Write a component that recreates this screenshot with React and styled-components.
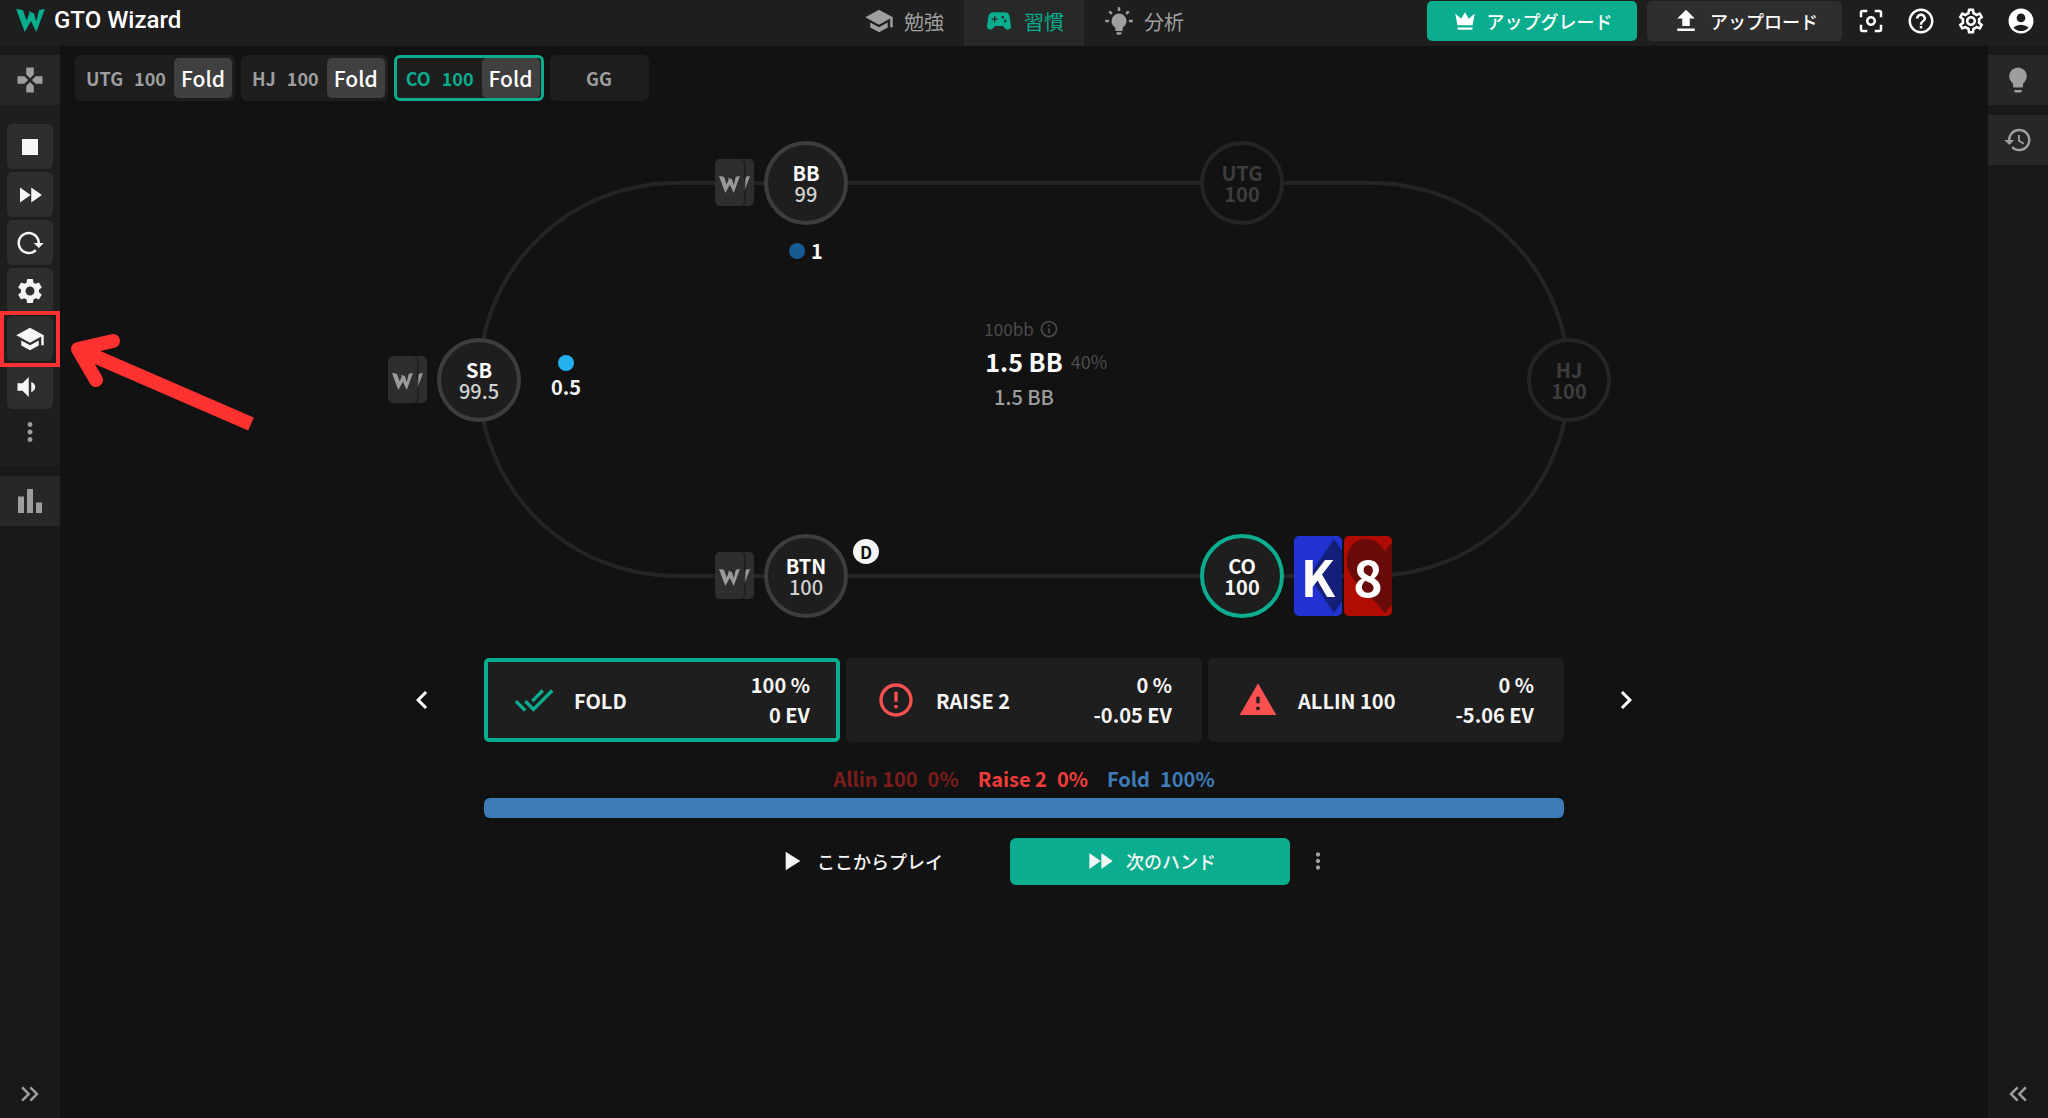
import React from "react";
import styled, { createGlobalStyle, css } from "styled-components";
import {
  MdAccountCircle,
  MdBarChart,
  MdCenterFocusWeak,
  MdChevronLeft,
  MdChevronRight,
  MdDoneAll,
  MdErrorOutline,
  MdFastForward,
  MdGamepad,
  MdHelpOutline,
  MdHistory,
  MdInfoOutline,
  MdKeyboardDoubleArrowLeft,
  MdKeyboardDoubleArrowRight,
  MdMoreVert,
  MdOutlineSettings,
  MdPlayArrow,
  MdSchool,
  MdSettings,
  MdSportsEsports,
  MdStop,
  MdUpload,
  MdWarning,
} from "react-icons/md";

const green = "#0aad8d";

const history = [
  { pos: "UTG", stack: 100, action: "Fold" },
  { pos: "HJ", stack: 100, action: "Fold" },
  { pos: "CO", stack: 100, action: "Fold", active: true },
];

const seats = [
  { pos: "BB", stack: "99", x: 30, y: 0, cards: true },
  { pos: "UTG", stack: "100", x: 70, y: 0, folded: true },
  { pos: "HJ", stack: "100", x: 100, y: 50, folded: true },
  { pos: "CO", stack: "100", x: 70, y: 100, hero: true },
  { pos: "BTN", stack: "100", x: 30, y: 100, cards: true, dealer: true },
  { pos: "SB", stack: "99.5", x: 0, y: 50, cards: true },
];

const actions = [
  { name: "FOLD", freq: "100 %", ev: "0 EV", icon: MdDoneAll, color: green, selected: true },
  { name: "RAISE 2", freq: "0 %", ev: "-0.05 EV", icon: MdErrorOutline, color: "#fa504f" },
  { name: "ALLIN 100", freq: "0 %", ev: "-5.06 EV", icon: MdWarning, color: "#fa504f" },
];

const strategy = [
  { name: "Allin 100", freq: 0, color: "#7d1c1c" },
  { name: "Raise 2", freq: 0, color: "#f23c3a" },
  { name: "Fold", freq: 100, color: "#3d7cb8" },
];

const Icon = ({ d, size = 30 }) => (
  <svg width={size} height={size} viewBox="0 0 24 24" fill="currentColor" aria-hidden="true">
    <path d={d} />
  </svg>
);

const CROWN =
  "M5 16L3 5L8.5 10L12 4L15.5 10L21 5L19 16H5M19 19C19 19.6 18.6 20 18 20H6C5.4 20 5 19.6 5 19V18H19V19Z";
const BULB =
  "M12,2A7,7 0 0,0 5,9C5,11.38 6.19,13.47 8,14.74V17A1,1 0 0,0 9,18H15A1,1 0 0,0 16,17V14.74C17.81,13.47 19,11.38 19,9A7,7 0 0,0 12,2M9,21A1,1 0 0,0 10,22H14A1,1 0 0,0 15,21V20H9V21Z";
const BULB_ON =
  "M12,6A6,6 0 0,1 18,12C18,14.22 16.79,16.16 15,17.2V19A1,1 0 0,1 14,20H10A1,1 0 0,1 9,19V17.2C7.21,16.16 6,14.22 6,12A6,6 0 0,1 12,6M14,21V22A1,1 0 0,1 13,23H11A1,1 0 0,1 10,22V21H14M20,11H23V13H20V11M1,11H4V13H1V11M13,1V4H11V1H13M4.92,3.5L7.05,5.64L5.63,7.05L3.5,4.93L4.92,3.5M16.95,5.63L19.07,3.5L20.5,4.93L18.37,7.05L16.95,5.63Z";
const RELOAD =
  "M2 12C2 16.97 6.03 21 11 21C13.39 21 15.68 20.06 17.4 18.4L15.9 16.9C14.63 18.25 12.86 19 11 19C4.76 19 1.64 11.46 6.05 7.05C10.46 2.64 18 5.77 18 12H15L19 16H19.1L23 12H20C20 7.03 15.97 3 11 3C6.03 3 2 7.03 2 12Z";
const VOLUME = "M2 9v6h4l5 5V4L6 9H2zM13 8v8c2-.7 3.200-2.200 3.200-4S15 8.700 13 8z";

const Logo = ({ width, height }) => (
  <svg width={width} height={height} viewBox="0 0 30 24" fill="currentColor" aria-hidden="true">
    <path d="M0 0L7 1L11 12L14 4L12.500 2L18.500 4.500L21 13L24 1L30 0L21 24L15.500 12.500L9 24Z" />
  </svg>
);

const CardBacks = () => (
  <Backs>
    <Back>
      <Logo width={21} height={17} />
    </Back>
    <Back>
      <Logo width={21} height={17} />
    </Back>
  </Backs>
);

const Seat = ({ seat }) => (
  <Spot style={{ left: `${seat.x}%`, top: `${seat.y}%` }}>
    {seat.cards && <CardBacks />}
    <Circle $hero={seat.hero} $folded={seat.folded}>
      <b>{seat.pos}</b>
      <span>{seat.stack}</span>
    </Circle>
    {seat.dealer && <Dealer>D</Dealer>}
    {seat.hero && (
      <Hand>
        <PlayingCard $color="#2132d0">
          <svg viewBox="0 0 48 80" aria-hidden="true">
            <path d="M40 3L65 40L40 77L15 40Z" fill="#141f79" />
          </svg>
          <span>K</span>
        </PlayingCard>
        <PlayingCard $color="#b00c04">
          <svg viewBox="0 0 48 80" aria-hidden="true">
            <path
              d="M41 16C36 6 29 3 21 3C10 3 3 13 3 25C3 45 25 56 41 77C57 56 79 45 79 25C79 13 72 3 61 3C53 3 46 6 41 16Z"
              fill="#690b09"
            />
          </svg>
          <span>8</span>
        </PlayingCard>
      </Hand>
    )}
  </Spot>
);

const Header = () => (
  <TopBar>
    <Brand href="#">
      <Logo width={29} height={23} />
      <span>GTO Wizard</span>
    </Brand>
    <Nav>
      <NavTab href="#study">
        <MdSchool size={30} />
        勉強
      </NavTab>
      <NavTab href="#practice" $active>
        <MdSportsEsports size={30} />
        習慣
      </NavTab>
      <NavTab href="#analyze">
        <Icon d={BULB_ON} />
        分析
      </NavTab>
    </Nav>
    <Tools>
      <TopButton $primary>
        <Icon d={CROWN} size={26} />
        アップグレード
      </TopButton>
      <TopButton>
        <MdUpload size={30} />
        アップロード
      </TopButton>
      <ToolButton aria-label="Focus">
        <MdCenterFocusWeak size={30} />
      </ToolButton>
      <ToolButton aria-label="Help">
        <MdHelpOutline size={30} />
      </ToolButton>
      <ToolButton aria-label="Settings">
        <MdOutlineSettings size={30} />
      </ToolButton>
      <ToolButton aria-label="Account">
        <MdAccountCircle size={30} />
      </ToolButton>
    </Tools>
  </TopBar>
);

const LeftRail = () => (
  <Rail>
    <RailTab aria-label="Trainer">
      <MdGamepad size={30} />
    </RailTab>
    <RailGroup>
      <RailButton aria-label="Stop">
        <MdStop size={32} />
      </RailButton>
      <RailButton aria-label="Skip">
        <MdFastForward size={30} />
      </RailButton>
      <RailButton aria-label="Reload">
        <Icon d={RELOAD} />
      </RailButton>
      <RailButton aria-label="Settings">
        <MdSettings size={30} />
      </RailButton>
      <Marked>
        <RailButton aria-label="Study">
          <MdSchool size={30} />
        </RailButton>
        <MarkBox />
        <MarkArrow viewBox="0 0 200 110" aria-hidden="true">
          <path d="M191 95L18 20" />
          <path d="M53 12L18 20L36 51" strokeLinecap="round" />
        </MarkArrow>
      </Marked>
      <RailButton aria-label="Volume">
        <Icon d={VOLUME} />
      </RailButton>
      <RailMore aria-label="More">
        <MdMoreVert size={30} />
      </RailMore>
    </RailGroup>
    <RailTab aria-label="Statistics">
      <MdBarChart size={36} />
    </RailTab>
    <RailToggle aria-label="Expand">
      <MdKeyboardDoubleArrowRight size={30} />
    </RailToggle>
  </Rail>
);

const RightRail = () => (
  <Rail>
    <RailTab aria-label="Hints">
      <Icon d={BULB} />
    </RailTab>
    <RailTab aria-label="History">
      <MdHistory size={30} />
    </RailTab>
    <RailToggle aria-label="Collapse">
      <MdKeyboardDoubleArrowLeft size={30} />
    </RailToggle>
  </Rail>
);

const App = () => {
  return (
    <Page>
      <GlobalStyle />
      <Header />
      <Body>
        <LeftRail />
        <Main>
          <HistoryRow>
            {history.map((item) => (
              <HistoryItem key={item.pos} $active={item.active}>
                <HistoryLabel>{item.pos}</HistoryLabel>
                <HistoryLabel>{item.stack}</HistoryLabel>
                <HistoryAction>{item.action}</HistoryAction>
              </HistoryItem>
            ))}
            <HistoryEnd>
              <HistoryLabel>GG</HistoryLabel>
            </HistoryEnd>
          </HistoryRow>

          <Table>
            <Felt />
            {seats.map((seat) => (
              <Seat key={seat.pos} seat={seat} />
            ))}
            <BigBlind>
              <Chip $color="#185a92" />1
            </BigBlind>
            <SmallBlind>
              <Chip $color="#22b1ee" />
              0.5
            </SmallBlind>
            <Pot>
              <PotDepth>
                100bb <MdInfoOutline size={20} />
              </PotDepth>
              <PotTotal>
                <b>1.5 BB</b>
                <small>40%</small>
              </PotTotal>
              <PotSub>1.5 BB</PotSub>
            </Pot>
          </Table>

          <Results>
            <Arrow aria-label="Previous">
              <MdChevronLeft size={36} />
            </Arrow>
            <ActionList>
              {actions.map(({ name, freq, ev, icon: ActionIcon, color, selected }) => (
                <ActionCard key={name} $selected={selected}>
                  <ActionIcon size={40} color={color} />
                  <span>{name}</span>
                  <ActionStats>
                    <span>{freq}</span>
                    <span>{ev}</span>
                  </ActionStats>
                </ActionCard>
              ))}
            </ActionList>
            <Arrow aria-label="Next">
              <MdChevronRight size={36} />
            </Arrow>
          </Results>

          <Strategy>
            <Legend>
              {strategy.map((item) => (
                <LegendItem key={item.name} $color={item.color}>
                  <span>{item.name}</span>
                  <span>{item.freq}%</span>
                </LegendItem>
              ))}
            </Legend>
            <Bar>
              {strategy.map((item) => (
                <BarPart key={item.name} $color={item.color} style={{ width: `${item.freq}%` }} />
              ))}
            </Bar>
          </Strategy>

          <Footer>
            <PlayButton>
              <MdPlayArrow size={32} />
              ここからプレイ
            </PlayButton>
            <NextButton>
              <MdFastForward size={32} />
              次のハンド
            </NextButton>
            <MoreButton aria-label="More">
              <MdMoreVert size={26} />
            </MoreButton>
          </Footer>
        </Main>
        <RightRail />
      </Body>
    </Page>
  );
};

const GlobalStyle = createGlobalStyle`
  * {
    box-sizing: border-box;
  }
  body {
    margin: 0;
    background: #121212;
  }
  body, button {
    font-family: "Noto Sans CJK JP", "Noto Sans", sans-serif;
    font-size: 20px;
    font-weight: 500;
    color: #f5f5f5;
  }
  button {
    padding: 0;
    border: 0;
    background: transparent;
    cursor: pointer;
  }
  a {
    text-decoration: none;
  }
  svg {
    display: block;
    flex-shrink: 0;
  }
`;

const center = css`
  display: flex;
  align-items: center;
  justify-content: center;
`;

const Page = styled.div`
  display: flex;
  flex-direction: column;
  min-height: 100vh;
`;

const TopBar = styled.header`
  display: grid;
  grid-template-columns: 1fr auto 1fr;
  height: 46px;
  background: #1e1e1e;
`;

const Brand = styled.a`
  display: flex;
  align-items: center;
  gap: 9px;
  padding: 0 0 6px 16px;
  color: ${green};
  span {
    color: #fff;
    font-family: Roboto, sans-serif;
    font-size: 24px;
    line-height: 24px;
  }
`;

const Nav = styled.nav`
  display: flex;
`;

const NavTab = styled.a`
  ${center}
  gap: 10px;
  width: 120px;
  padding-bottom: 4px;
  font-weight: 400;
  color: ${(props) => (props.$active ? green : "#9e9e9e")};
  background: ${(props) => (props.$active ? "#272828" : "transparent")};
`;

const Tools = styled.div`
  display: flex;
  align-items: center;
  justify-content: flex-end;
  padding: 0 2px 4px 0;
`;

const TopButton = styled.button`
  ${center}
  gap: 9px;
  width: ${(props) => (props.$primary ? 210 : 195)}px;
  height: 40px;
  margin-right: ${(props) => (props.$primary ? 10 : 4)}px;
  border-radius: 5px;
  background: ${(props) => (props.$primary ? green : "#2e2e2e")};
  color: #fff;
  font-size: 18px;
  line-height: 24px;
`;

const ToolButton = styled.button`
  ${center}
  width: 50px;
  height: 40px;
  color: #fff;
`;

const Body = styled.div`
  display: flex;
  flex: 1;
`;

const Rail = styled.aside`
  display: flex;
  flex-direction: column;
  flex-shrink: 0;
  gap: 10px;
  width: 60px;
  padding: 9px 0;
  background: #191919;
`;

const RailTab = styled.button`
  ${center}
  height: 50px;
  background: #262727;
  color: #9e9e9e;
`;

const RailGroup = styled.div`
  display: flex;
  flex-direction: column;
  gap: 3px;
  height: 361px;
  margin-top: -10px;
  padding: 19px 7px 0;
  background: #1e1e1e;
`;

const RailButton = styled.button`
  ${center}
  width: 100%;
  height: 45px;
  border-radius: 5px;
  background: #2e2e2e;
  color: #f5f7f7;
`;

const RailMore = styled.button`
  ${center}
  height: 40px;
  color: #9e9e9e;
`;

const RailToggle = styled.button`
  ${center}
  height: 30px;
  margin-top: auto;
  color: #9e9e9e;
`;

const Marked = styled.div`
  position: relative;
`;

const MarkBox = styled.div`
  position: absolute;
  inset: -5px -7px -6px;
  border: 4px solid #ff3131;
  pointer-events: none;
`;

const MarkArrow = styled.svg`
  position: absolute;
  top: 13px;
  left: 53px;
  width: 200px;
  height: 110px;
  fill: none;
  stroke: #ff3131;
  stroke-width: 14px;
  stroke-linejoin: round;
  pointer-events: none;
`;

const Main = styled.main`
  display: flex;
  flex: 1;
  flex-direction: column;
  align-items: center;
  padding: 9px 15px;
`;

const HistoryRow = styled.div`
  display: flex;
  align-self: stretch;
  gap: 6px;
`;

const HistoryItem = styled.button`
  display: flex;
  align-items: center;
  gap: 11px;
  height: 46px;
  padding: ${(props) => (props.$active ? "0 1px 0 9px" : "0 3px 0 11px")};
  border: ${(props) => (props.$active ? `3px solid ${green}` : "0")};
  border-radius: 6px;
  background: #1e1e1e;
  color: ${(props) => (props.$active ? green : "#9e9e9e")};
`;

const HistoryLabel = styled.span`
  padding-bottom: 1px;
  font-size: 18px;
  font-weight: 700;
`;

const HistoryAction = styled.span`
  ${center}
  width: 58px;
  height: 40px;
  margin-left: -3px;
  padding-bottom: 1px;
  border-radius: 5px;
  background: #404040;
  color: #fff;
  font-size: 21px;
`;

const HistoryEnd = styled.div`
  ${center}
  width: 99px;
  border-radius: 6px;
  background: #1e1e1e;
  color: #9e9e9e;
`;

const Table = styled.section`
  position: relative;
  width: 100%;
  max-width: 1090px;
  height: 393px;
  margin-top: 82px;
`;

const Felt = styled.div`
  position: absolute;
  inset: -2px;
  border: 4px solid #242424;
  border-radius: 200px;
`;

const Spot = styled.div`
  position: absolute;
  width: 84px;
  height: 84px;
  transform: translate(-50%, -50%);
`;

const Circle = styled.div`
  display: flex;
  flex-direction: column;
  align-items: center;
  justify-content: center;
  height: 100%;
  border: 4px solid ${(props) => (props.$hero ? green : props.$folded ? "#242424" : "#3d3d3d")};
  border-radius: 50%;
  background: ${(props) => (props.$folded ? "#121212" : "#1e1e1e")};
  color: ${(props) => (props.$hero ? "#f5f5f5" : props.$folded ? "#3d3d3d" : "#d0d0d0")};
  font-size: 20px;
  font-weight: ${(props) => (props.$hero || props.$folded ? 700 : 500)};
  line-height: 21px;
  b {
    color: ${(props) => (props.$folded ? "#3d3d3d" : "#fff")};
    font-weight: 700;
  }
`;

const Backs = styled.div`
  position: absolute;
  top: 18px;
  right: 94px;
  display: flex;
  flex-direction: row-reverse;
`;

const Back = styled.div`
  ${center}
  width: 29px;
  height: 47px;
  padding-top: 4px;
  border-radius: 5px;
  background: #2e2e2e;
  color: #9a9a9a;
  & + & {
    margin-right: -19px;
    z-index: 1;
    box-shadow: 1px 0 2px #151515;
  }
`;

const Dealer = styled.div`
  ${center}
  position: absolute;
  top: 5px;
  left: 89px;
  width: 26px;
  height: 25px;
  border-radius: 50%;
  background: #f5f7f7;
  color: #121212;
  font-size: 17px;
  font-weight: 700;
`;

const Hand = styled.div`
  position: absolute;
  top: 2px;
  left: 94px;
  display: flex;
  gap: 2px;
`;

const PlayingCard = styled.div`
  ${center}
  position: relative;
  width: 48px;
  height: 80px;
  padding-bottom: 2px;
  overflow: hidden;
  border-radius: 5px;
  background: ${(props) => props.$color};
  color: #fff;
  font-size: 50px;
  font-weight: 700;
  line-height: 78px;
  svg {
    position: absolute;
    inset: 0;
  }
  span {
    position: relative;
  }
`;

const Chip = styled.i`
  width: 16px;
  height: 16px;
  border-radius: 50%;
  background: ${(props) => props.$color};
`;

const BigBlind = styled.div`
  ${center}
  position: absolute;
  top: 58px;
  left: 30%;
  gap: 6px;
  font-weight: 700;
  line-height: 20px;
  transform: translateX(-50%);
`;

const SmallBlind = styled.div`
  ${center}
  position: absolute;
  top: 49%;
  left: 72px;
  flex-direction: column;
  gap: 6px;
  font-weight: 700;
  line-height: 20px;
  transform: translateY(-50%);
`;

const Pot = styled.div`
  display: flex;
  flex-direction: column;
  align-items: center;
  padding-top: 134px;
`;

const PotDepth = styled.div`
  display: flex;
  align-items: center;
  gap: 5px;
  padding-right: 5px;
  color: #4c4c4c;
  font-size: 17px;
  font-weight: 400;
  line-height: 24px;
`;

const PotTotal = styled.div`
  display: grid;
  grid-template-columns: 1fr auto 1fr;
  align-items: center;
  gap: 8px;
  width: 300px;
  line-height: 40px;
  b {
    grid-column: 2;
    color: #fff;
    font-size: 25px;
    font-weight: 700;
  }
  small {
    color: #4c4c4c;
    font-size: 18px;
    font-weight: 400;
  }
`;

const PotSub = styled.div`
  color: #9e9e9e;
  line-height: 32px;
`;

const Results = styled.section`
  display: flex;
  align-items: center;
  justify-content: center;
  gap: 44px;
  width: 100%;
  margin-top: 82px;
`;

const Arrow = styled.button`
  color: #fff;
`;

const ActionList = styled.div`
  display: grid;
  grid-template-columns: repeat(3, 1fr);
  flex: 1;
  gap: 6px;
  max-width: 1080px;
`;

const ActionCard = styled.button`
  display: flex;
  align-items: center;
  gap: 20px;
  height: 84px;
  padding: 0 26px;
  border: 4px solid ${(props) => (props.$selected ? green : "#1e1e1e")};
  border-radius: 5px;
  background: #1e1e1e;
  font-weight: 700;
`;

const ActionStats = styled.span`
  display: flex;
  flex-direction: column;
  margin-left: auto;
  text-align: right;
  line-height: 30px;
`;

const Strategy = styled.section`
  width: 100%;
  max-width: 1080px;
  margin-top: 22px;
`;

const Legend = styled.div`
  display: flex;
  justify-content: center;
  gap: 19px;
  font-weight: 700;
  line-height: 30px;
`;

const LegendItem = styled.div`
  display: flex;
  gap: 10px;
  color: ${(props) => props.$color};
`;

const Bar = styled.div`
  display: flex;
  height: 20px;
  margin-top: 4px;
  overflow: hidden;
  border-radius: 6px;
`;

const BarPart = styled.div`
  background: ${(props) => props.$color};
`;

const Footer = styled.footer`
  display: flex;
  justify-content: center;
  margin-top: 20px;
  button {
    height: 47px;
    padding-bottom: 1px;
    font-size: 18px;
    line-height: 24px;
  }
`;

const PlayButton = styled.button`
  ${center}
  gap: 10px;
  width: 308px;
  padding-left: 6px;
`;

const NextButton = styled.button`
  ${center}
  gap: 10px;
  width: 280px;
  border-radius: 6px;
  background: ${green};
`;

const MoreButton = styled.button`
  ${center}
  width: 56px;
  color: #9e9e9e;
`;

export default App;
